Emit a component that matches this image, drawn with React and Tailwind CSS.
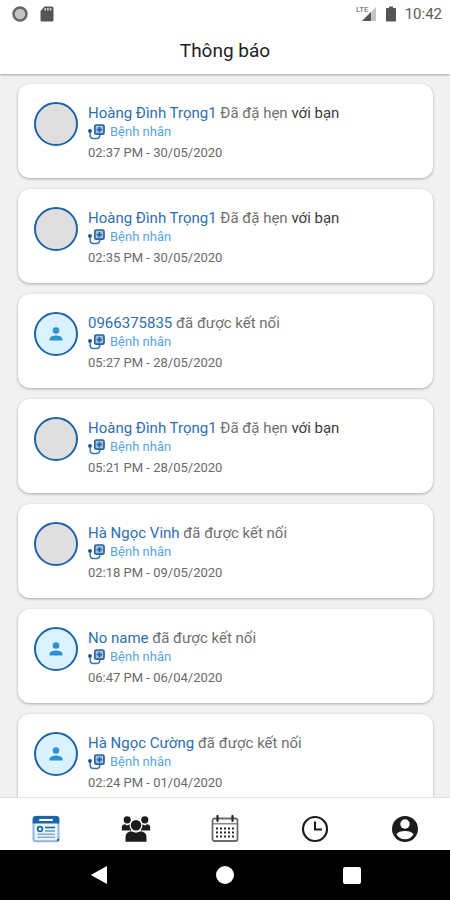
import React, { useState } from "react";

const notifications = [
  { id: 1, name: "Hoàng Đình Trọng1", action: "Đã đặ hẹn", target: "với bạn", time: "02:37 PM - 30/05/2020", hasPhoto: true },
  { id: 2, name: "Hoàng Đình Trọng1", action: "Đã đặ hẹn", target: "với bạn", time: "02:35 PM - 30/05/2020", hasPhoto: true },
  { id: 3, name: "0966375835", action: "đã được kết nối", time: "05:27 PM - 28/05/2020", hasPhoto: false },
  { id: 4, name: "Hoàng Đình Trọng1", action: "Đã đặ hẹn", target: "với bạn", time: "05:21 PM - 28/05/2020", hasPhoto: true },
  { id: 5, name: "Hà Ngọc Vinh", action: "đã được kết nối", time: "02:18 PM - 09/05/2020", hasPhoto: true },
  { id: 6, name: "No name", action: "đã được kết nối", time: "06:47 PM - 06/04/2020", hasPhoto: false },
  { id: 7, name: "Hà Ngọc Cường", action: "đã được kết nối", time: "02:24 PM - 01/04/2020", hasPhoto: false },
];

const StatusBar = () => (
  <div className="flex h-7 shrink-0 items-center justify-between pr-2 pl-3 text-[#5c5c5c]">
    <div className="flex items-center gap-3">
      <svg viewBox="0 0 16 16" className="h-4 w-4">
        <circle cx="8" cy="8" r="6.5" fill="#c4c4c4" stroke="#666" strokeWidth="2.5" />
      </svg>
      <svg viewBox="0 0 14 16" className="h-4 w-3.5">
        <path d="M4.5 0.5H12a1.5 1.5 0 0 1 1.5 1.5v12a1.5 1.5 0 0 1-1.5 1.5H2A1.5 1.5 0 0 1 .5 14V5z" fill="#555" />
        <path d="M5.3 2v2.4M7.9 2v2.4M10.5 2v2.4" stroke="#ddd" strokeWidth="1.5" />
      </svg>
    </div>
    <div className="flex items-center">
      <span className="self-start text-[8px] leading-3">LTE</span>
      <svg viewBox="0 0 16 16" className="-ml-2 h-4 w-4">
        <path d="M15 1v14H1z" fill="#c4c4c4" />
        <path d="M10 6v9H1z" fill="#555" />
      </svg>
      <svg viewBox="0 0 10 16" className="ml-2 h-4 w-3">
        <path d="M3 .5h4V2h2a1 1 0 0 1 1 1v11.5a1 1 0 0 1-1 1H1a1 1 0 0 1-1-1V3a1 1 0 0 1 1-1h2z" fill="#555" />
      </svg>
      <span className="ml-2 text-[15px] leading-5">10:42</span>
    </div>
  </div>
);

const Avatar = ({ hasPhoto }) =>
  hasPhoto ? (
    <div className="h-11 w-11 shrink-0 rounded-full border-2 border-[#1c64a5] bg-[#dfdfdf]" />
  ) : (
    <div className="flex h-11 w-11 shrink-0 items-center justify-center rounded-full border-2 border-[#1c64a5] bg-[#daf1ff]">
      <svg viewBox="0 0 14 14" className="h-3.5 w-3.5" fill="#2b93d1">
        <circle cx="7" cy="3.5" r="3.3" />
        <path d="M.5 13.5v-1.6C.5 9.7 4.8 8.5 7 8.5s6.5 1.2 6.5 3.4v1.6z" />
      </svg>
    </div>
  );

const PatientIcon = () => (
  <svg viewBox="0 0 17 16" className="h-4 w-[17px]" fill="none">
    <circle cx="2" cy="7" r="1.9" fill="#174f87" />
    <path d="M2.2 8v3.5q0 3 3 3h3.5q3 0 3-3v-1" stroke="#3b78ab" strokeWidth="1.5" />
    <rect x="6.8" y="1" width="9.2" height="9.2" rx="1.5" fill="#9fc2e2" stroke="#2a6298" strokeWidth="1.7" />
    <path d="M11.4 3v5.2M8.8 5.6h5.2" stroke="#2a6298" strokeWidth="1.8" />
  </svg>
);

const NotificationCard = ({ item }) => (
  <li className="flex shrink-0 gap-2.5 rounded-xl bg-white px-4 pt-[18px] pb-4 shadow-[0_1px_3px_rgba(0,0,0,0.3)]">
    <Avatar hasPhoto={item.hasPhoto} />
    <div className="min-w-0">
      <p className="text-[15px] leading-[22px] text-[#707070]">
        <span className="text-[#2f6fae]">{item.name}</span> {item.action}
        {item.target && <span className="text-[#3c3c3c]"> {item.target}</span>}
      </p>
      <div className="flex h-4 items-center gap-[5px] text-[13px] leading-4 text-[#57a5e2]">
        <PatientIcon />
        <span>Bệnh nhân</span>
      </div>
      <p className="mt-1 text-[13px] leading-[18px] text-[#6a6a6a]">{item.time}</p>
    </div>
  </li>
);

const NewsIcon = () => (
  <svg viewBox="0 0 28 28" className="h-7 w-7" fill="none">
    <rect x="1.5" y="1.8" width="25" height="24.5" rx="2.5" fill="#edf5fb" stroke="#8db7db" strokeWidth="2" />
    <path d="M.7 8.5V4q0-3 3-3h20.6q3 0 3 3v4.5z" fill="#1c66a8" />
    <path d="M8 5h12" stroke="#fff" strokeWidth="2" strokeLinecap="round" />
    <circle cx="8" cy="14" r="2.4" stroke="#1c66a8" strokeWidth="1.7" />
    <path d="M13 12.5h10" stroke="#1c66a8" strokeWidth="1.6" />
    <path d="M13 16h10" stroke="#5f97c7" strokeWidth="1.5" />
    <path d="M5.5 19.3H23M5.5 22.3H23" stroke="#86add0" strokeWidth="1.5" />
    <circle cx="26" cy="25" r="1.2" fill="#1c66a8" />
  </svg>
);

const GroupIcon = () => (
  <svg viewBox="0 0 30 28" className="h-7 w-[30px]" fill="#1c1c1c">
    <circle cx="6.2" cy="4.8" r="3.6" />
    <circle cx="23.8" cy="4.8" r="3.6" />
    <path d="M.8 15.5v-3q0-3 3-3.3l2.4 1.3 2.3-1.3 1.5.9v5.4z" />
    <path d="M29.2 15.5v-3q0-3-3-3.3l-2.4 1.3-2.3-1.3-1.5.9v5.4z" />
    <path d="M4.5 26.7v-4q0-5.7 5.3-6.4l5.2 1.5 5.2-1.5q5.3.7 5.3 6.4v4z" />
    <circle cx="15" cy="10.3" r="5.9" stroke="#fff" strokeWidth="1.2" />
  </svg>
);

const dotRows = [13.5, 17.5, 21.5];
const dotColumns = [6, 10, 14, 18, 22];

const CalendarIcon = () => (
  <svg viewBox="0 0 28 28" className="h-7 w-7" fill="none" stroke="#292929">
    <rect x="1.5" y="3.5" width="25" height="22.5" rx="2" stroke="#6b6b6b" strokeWidth="1.8" />
    <path d="M2 8.7h24" stroke="#8a8a8a" strokeWidth="1.6" />
    <path d="M6.5 1v5M21.5 1v5" strokeWidth="2.2" strokeLinecap="round" />
    {dotRows.map((y) =>
      dotColumns.map((x) => (
        <rect key={`${x}-${y}`} x={x - 1} y={y - 1} width="2" height="2" fill="#292929" stroke="none" />
      )),
    )}
  </svg>
);

const ClockIcon = () => (
  <svg viewBox="0 0 28 28" className="h-7 w-7" fill="none" stroke="#1c1c1c">
    <circle cx="14" cy="14" r="12" strokeWidth="2.2" />
    <path d="M14 6.5v8h7" strokeWidth="2.1" />
  </svg>
);

const AccountIcon = () => (
  <svg viewBox="0 0 28 28" className="h-7 w-7">
    <circle cx="14" cy="14" r="13" fill="#1c1c1c" />
    <circle cx="14" cy="9" r="4.7" fill="#fff" />
    <path d="M5.5 19.3q2.3-3.2 8.5-3.2t8.5 3.2q-2.6 5-8.500 5t-8.500-5z" fill="#fff" />
  </svg>
);

const tabs = [
  { id: "news", label: "Thông báo", Icon: NewsIcon },
  { id: "patients", label: "Bệnh nhân", Icon: GroupIcon },
  { id: "calendar", label: "Lịch hẹn", Icon: CalendarIcon },
  { id: "history", label: "Lịch sử", Icon: ClockIcon },
  { id: "account", label: "Tài khoản", Icon: AccountIcon },
];

const SystemBar = () => (
  <div className="grid h-[50px] shrink-0 grid-cols-[1fr_auto_1fr] items-center bg-black">
    <button type="button" aria-label="Back" className="ml-[90px] justify-self-start">
      <svg viewBox="0 0 18 20" className="h-5 w-[18px]" fill="#fff">
        <path d="M17 1v18L.8 10z" />
      </svg>
    </button>
    <button type="button" aria-label="Home" className="h-[18px] w-[18px] rounded-full bg-white" />
    <button type="button" aria-label="Recent apps" className="mr-[89px] h-[17px] w-[18px] justify-self-end rounded-xs bg-white" />
  </div>
);

const App = () => {
  const [activeTab, setActiveTab] = useState("news");

  return (
    <div className="flex h-screen flex-col bg-[#f1f1f1] font-['Roboto',sans-serif]">
      <header className="z-10 shrink-0 bg-white shadow-[0_1px_2px_rgba(0,0,0,0.35)]">
        <StatusBar />
        <h1 className="h-[46px] text-center text-[19px] leading-[46px] text-[#222]">Thông báo</h1>
      </header>

      <main className="min-h-0 flex-1 overflow-hidden">
        <ul className="flex flex-col gap-[11px] pt-2.5 pr-[17px] pl-[18px]">
          {notifications.map((item) => (
            <NotificationCard key={item.id} item={item} />
          ))}
        </ul>
      </main>

      <nav className="grid h-[53px] shrink-0 grid-cols-5 border-t border-[#e4e4e4] bg-white pt-2.5 pl-px">
        {tabs.map(({ id, label, Icon }) => (
          <button
            key={id}
            type="button"
            aria-label={label}
            aria-current={activeTab === id ? "page" : undefined}
            onClick={() => setActiveTab(id)}
            className="flex items-center justify-center"
          >
            <Icon />
          </button>
        ))}
      </nav>
      <SystemBar />
    </div>
  );
};

export default App;
